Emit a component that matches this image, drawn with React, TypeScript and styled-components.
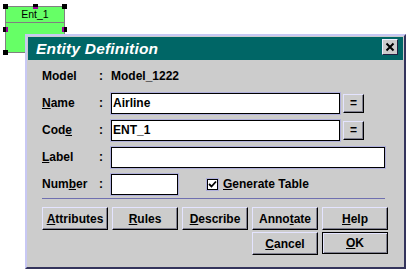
import React from "react";
import styled, { createGlobalStyle } from "styled-components";

const GlobalStyle = createGlobalStyle`
  html, body { margin: 0; padding: 0; background: #ffffff; }
  body { font-family: "Liberation Sans", Arial, sans-serif; }
  * { box-sizing: border-box; }
`;

const GRAY = "#cccccc";
const LAV = "#c8c8f4";
const DARK = "#34345c";
const TEAL = "#006666";

const Canvas = styled.div`
  position: relative;
  width: 411px;
  height: 274px;
  overflow: hidden;
  background: #ffffff;
`;

const EntityNode = styled.div`
  position: absolute;
  left: 5px;
  top: 6px;
  width: 60px;
  height: 47px;
  background: #66ff66;
  border: 1px solid #808080;
  display: flex;
  flex-direction: column;
`;

const EntityTitle = styled.div`
  height: 16px;
  border-bottom: 1px solid #808080;
  font-size: 10.5px;
  line-height: 15px;
  color: #000;
  text-align: center;
`;

const Handle = styled.div<{ $x: number; $y: number; $inner?: string }>`
  position: absolute;
  left: ${(p) => p.$x - 2}px;
  top: ${(p) => p.$y - 2}px;
  width: 5px;
  height: 5px;
  background: #000;
  &::after {
    content: "";
    position: absolute;
    background: #990099;
    ${(p) =>
      p.$inner === "bottom"
        ? "left:0;right:0;bottom:0;height:2px;"
        : p.$inner === "right"
        ? "top:0;bottom:0;right:0;width:2px;"
        : p.$inner === "left"
        ? "top:0;bottom:0;left:0;width:2px;"
        : "display:none;"}
  }
`;

const Dialog = styled.div`
  position: absolute;
  left: 25px;
  top: 34px;
  width: 381px;
  height: 235px;
  background: ${GRAY};
  border-top: 2px solid ${LAV};
  border-left: 2px solid ${LAV};
  border-right: 2px solid ${DARK};
  border-bottom: 2px solid ${DARK};
  padding: 1px;
  display: flex;
  flex-direction: column;
`;

const TitleBar = styled.div`
  height: 23px;
  background: ${TEAL};
  display: flex;
  align-items: flex-start;
  justify-content: space-between;
  padding: 2px 5px 0 8px;
`;

const TitleText = styled.div`
  color: #ffffff;
  font-weight: bold;
  font-style: italic;
  font-size: 15.5px;
  line-height: 19px;
  letter-spacing: 0.2px;
`;

const CloseButton = styled.div`
  width: 16px;
  height: 16px;
  background: ${GRAY};
  border-top: 1px solid #eeeeff;
  border-left: 1px solid #eeeeff;
  border-right: 1px solid #202040;
  border-bottom: 1px solid #202040;
  display: flex;
  align-items: center;
  justify-content: center;
`;

const Body = styled.div`
  padding: 5px 0 0 14px;
  display: flex;
  flex-direction: column;
`;

const Form = styled.div`
  display: grid;
  grid-template-columns: 57px 12px auto;
  grid-auto-rows: 22px;
  row-gap: 5px;
  align-items: center;
`;

const Label = styled.div`
  font-size: 12px;
  font-weight: bold;
  color: #000;
`;

const Colon = styled.div`
  font-size: 12px;
  font-weight: bold;
  color: #000;
`;

const FieldRow = styled.div`
  display: flex;
  align-items: center;
  height: 22px;
`;

const Input = styled.div<{ $w: number }>`
  width: ${(p) => p.$w}px;
  height: 21px;
  background: #ffffff;
  border: 1px solid #000;
  box-shadow: 0 0 0 1px #b0b0dc;
  font-size: 12px;
  font-weight: bold;
  line-height: 19px;
  padding-left: 1px;
  color: #000;
`;

const EqButton = styled.div`
  width: 21px;
  height: 19px;
  margin-left: 3px;
  background: ${GRAY};
  border-top: 1px solid #e4e4ff;
  border-left: 1px solid #e4e4ff;
  border-right: 1px solid #000;
  border-bottom: 1px solid #000;
  box-shadow: inset -1px -1px 0 #808090;
  font-size: 12px;
  font-weight: bold;
  line-height: 16px;
  text-align: center;
`;

const CheckLabel = styled.label`
  display: flex;
  align-items: center;
  margin-left: 29px;
  font-size: 12px;
  font-weight: bold;
  color: #000;
  gap: 5px;
`;

const CheckBox = styled.div`
  width: 11px;
  height: 11px;
  background: #fff;
  border: 1px solid #000;
  box-shadow: 0 0 0 1px #b0b0dc;
  display: flex;
  align-items: center;
  justify-content: center;
`;

const Separator = styled.div`
  width: 343px;
  height: 1px;
  margin-top: 3px;
  background: #7070b0;
`;

const ButtonGrid = styled.div`
  margin-top: 8px;
  width: 344px;
  display: grid;
  grid-template-columns: repeat(5, 66px);
  column-gap: 4px;
  row-gap: 3px;
  grid-auto-rows: 22px;
`;

const Button = styled.div<{ $col?: number; $default?: boolean }>`
  ${(p) => (p.$col ? `grid-column: ${p.$col};` : "")}
  height: ${(p) => (p.$default ? 22 : 23)}px;
  background: ${GRAY};
  border-top: 1px solid ${(p) => (p.$default ? "#000" : "#e4e4ff")};
  border-left: 1px solid ${(p) => (p.$default ? "#000" : "#e4e4ff")};
  border-right: 1px solid #000;
  border-bottom: 1px solid #000;
  box-shadow: ${(p) =>
    p.$default
      ? "inset 1px 1px 0 #e4e4ff, inset -1px -1px 0 #808090"
      : "inset -1px -1px 0 #808090"};
  font-size: 12px;
  font-weight: bold;
  color: #000;
  display: flex;
  align-items: center;
  justify-content: center;
`;

const U = styled.span`
  text-decoration: underline;
`;

export default function App() {
  return (
    <>
      <GlobalStyle />
      <Canvas>
        <EntityNode>
          <EntityTitle>Ent_1</EntityTitle>
        </EntityNode>
        <Handle $x={5} $y={6} />
        <Handle $x={35} $y={6} $inner="bottom" />
        <Handle $x={64} $y={6} />
        <Handle $x={5} $y={29} $inner="right" />
        <Handle $x={64} $y={29} $inner="left" />
        <Handle $x={5} $y={52} />
        <Dialog>
          <TitleBar>
            <TitleText>Entity Definition</TitleText>
            <CloseButton>
              <svg width="10" height="10" viewBox="0 0 10 10">
                <path d="M1.5 1.5 L8.5 8.5 M8.5 1.5 L1.5 8.5" stroke="#000" strokeWidth="2" />
              </svg>
            </CloseButton>
          </TitleBar>
          <Body>
            <Form>
              <Label>Model</Label>
              <Colon>:</Colon>
              <Label>Model_1222</Label>

              <Label><U>N</U>ame</Label>
              <Colon>:</Colon>
              <FieldRow>
                <Input $w={229}>Airline</Input>
                <EqButton>=</EqButton>
              </FieldRow>

              <Label>Cod<U>e</U></Label>
              <Colon>:</Colon>
              <FieldRow>
                <Input $w={229}>ENT_1</Input>
                <EqButton>=</EqButton>
              </FieldRow>

              <Label><U>L</U>abel</Label>
              <Colon>:</Colon>
              <FieldRow>
                <Input $w={274} />
              </FieldRow>

              <Label>Num<U>b</U>er</Label>
              <Colon>:</Colon>
              <FieldRow>
                <Input $w={67} />
                <CheckLabel>
                  <CheckBox>
                    <svg width="9" height="9" viewBox="0 0 9 9">
                      <path d="M1 4 L3.5 6.5 L8 1.5" stroke="#000" strokeWidth="1.8" fill="none" />
                    </svg>
                  </CheckBox>
                  <span><U>G</U>enerate Table</span>
                </CheckLabel>
              </FieldRow>
            </Form>
            <Separator />
            <ButtonGrid>
              <Button><U>A</U>ttributes</Button>
              <Button><U>R</U>ules</Button>
              <Button><U>D</U>escribe</Button>
              <Button>Anno<U>t</U>ate</Button>
              <Button><U>H</U>elp</Button>
              <Button $col={4}><U>C</U>ancel</Button>
              <Button $col={5} $default><U>O</U>K</Button>
            </ButtonGrid>
          </Body>
        </Dialog>
      </Canvas>
    </>
  );
}
